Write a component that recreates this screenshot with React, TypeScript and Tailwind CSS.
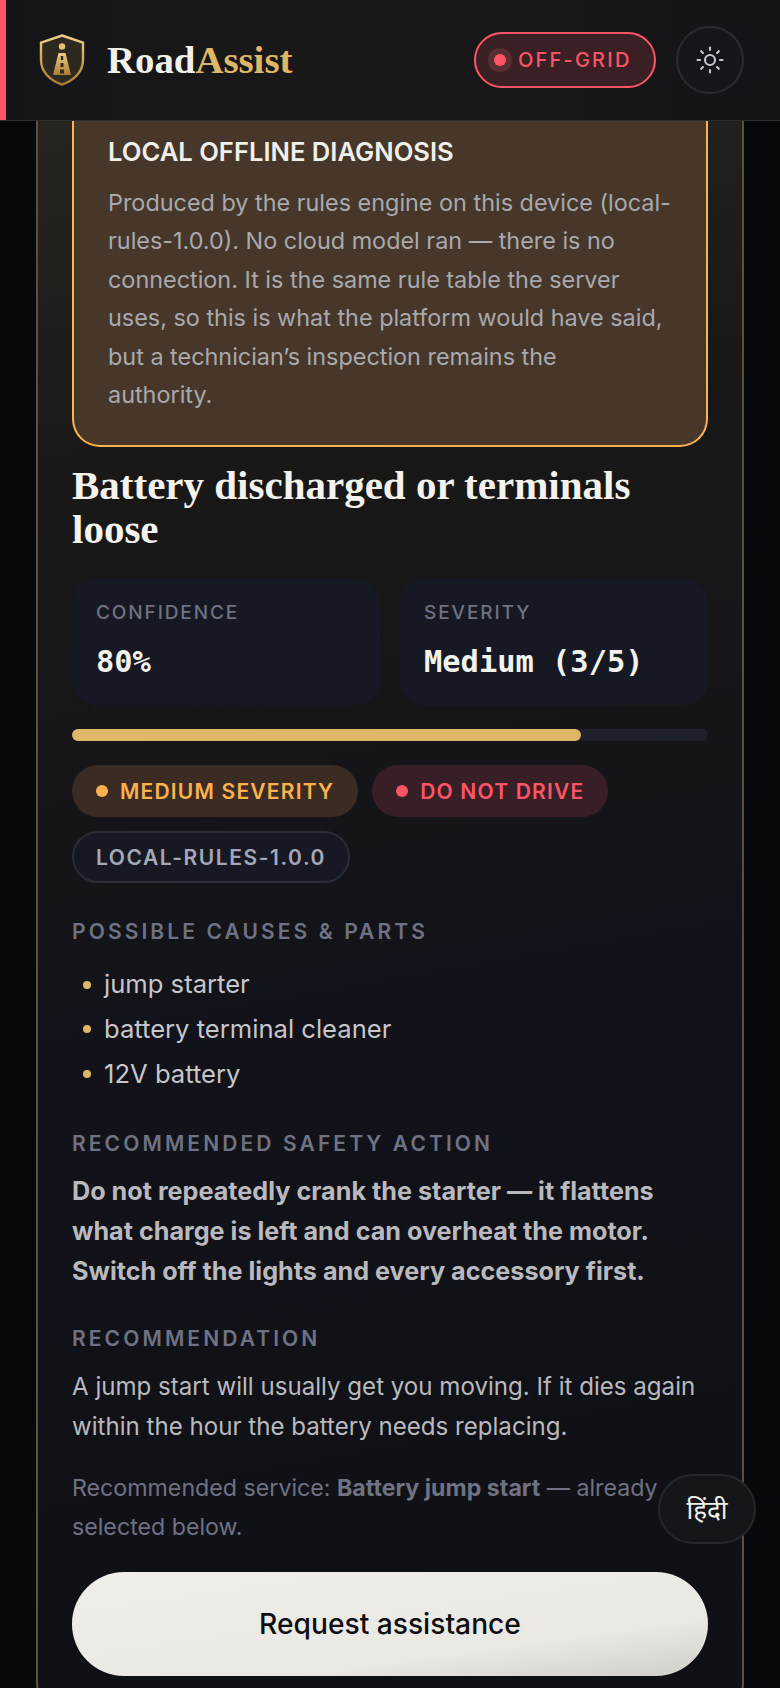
import type { ReactNode } from 'react';
import { Sun } from 'lucide-react';

const sans = 'font-["Inter","Noto_Sans",sans-serif]';

function Logo() {
  return (
    <svg width="46" height="52" viewBox="0 0 46 52" className="shrink-0">
      <defs>
        <linearGradient id="gold" x1="0" y1="0" x2="0" y2="1">
          <stop offset="0" stopColor="#f0cf85" />
          <stop offset="1" stopColor="#a87c30" />
        </linearGradient>
      </defs>
      <path
        d="M23 1.5 L44 8.5 V26 C44 38 35 46.5 23 50.5 C11 46.5 2 38 2 26 V8.5 Z"
        fill="#2d2920"
        stroke="url(#gold)"
        strokeWidth="2.4"
      />
      <circle cx="23" cy="12.5" r="3.2" fill="#e8c070" />
      <path d="M19.5 19 H26.5 L32 41 H14 Z" fill="url(#gold)" />
      <rect x="21.8" y="22" width="2.4" height="4" fill="#2d2920" />
      <rect x="21.5" y="29" width="3" height="4" fill="#2d2920" />
      <rect x="21" y="35.5" width="4" height="4" fill="#2d2920" />
    </svg>
  );
}

function Header() {
  return (
    <header className="relative z-10 flex h-[121px] shrink-0 items-center justify-between border-b border-[#2e2e30] bg-[linear-gradient(90deg,#141518,#1a1918_45%,#131418)] pl-[39px] pr-[36px]">
      <div className="absolute bottom-0 left-0 top-0 w-[6px] bg-[#ff5566]" />
      <div className="flex items-center gap-[22px]">
        <Logo />
        <div className="font-['Liberation_Serif',serif] text-[38.8px] font-bold leading-none text-[#f2f0ea]">
          Road<span className="text-[#dfb765]">Assist</span>
        </div>
      </div>
      <div className="flex items-center gap-[20px]">
        <div className="flex h-[56px] w-[182px] items-center rounded-full border-2 border-[#ff5566] bg-[#3a1f25] pl-[12px]">
          <span className="flex h-[24px] w-[24px] items-center justify-center rounded-full bg-[#5a2c33]">
            <span className="h-[12px] w-[12px] rounded-full bg-[#ff5566]" />
          </span>
          <span className={`ml-[6px] text-[20px] font-medium tracking-[2.2px] text-[#ff5566] ${sans}`}>OFF-GRID</span>
        </div>
        <div className="flex h-[68px] w-[68px] items-center justify-center rounded-full border-2 border-[#2b2c31] bg-[#15161b]">
          <Sun size={30} strokeWidth={1.7} className="text-[#c3c5cf]" />
        </div>
      </div>
    </header>
  );
}

function Stat({ label, value }: { label: string; value: string }) {
  return (
    <div className="h-[126px] flex-1 rounded-[24px] bg-[#161923] px-[24px] pt-[23px]">
      <div className={`text-[19px] font-medium leading-[22px] tracking-[1.9px] text-[#6f7282] ${sans}`}>{label}</div>
      <div className="mt-[20px] font-['DejaVu_Sans_Mono',monospace] text-[30.4px] font-bold leading-[36px] text-[#f4f2ec]">{value}</div>
    </div>
  );
}

function Chip({ dot, className, children }: { dot?: string; className: string; children: ReactNode }) {
  return (
    <span className={`flex h-[52px] items-center gap-[12px] rounded-full px-[24px] text-[21px] font-semibold tracking-[1.2px] ${sans} ${className}`}>
      {dot && <span className={`h-[12px] w-[12px] rounded-full ${dot}`} />}
      {children}
    </span>
  );
}

function Label({ children }: { children: ReactNode }) {
  return <h3 className={`text-[21px] font-semibold leading-[26px] tracking-[3.1px] text-[#6f7282] ${sans}`}>{children}</h3>;
}

export default function App() {
  return (
    <div className={`flex h-[1688px] w-[780px] flex-col overflow-hidden bg-[#07080c] ${sans}`}>
      <Header />
      <main className="min-h-0 flex-1 overflow-hidden px-[36px]">
        <section className="rounded-b-[24px] border-x-2 border-b-2 border-[#5d5038] bg-[linear-gradient(170deg,#272420_0%,#191817_22%,#12131a_55%,#0f1015_100%)] px-[34px] pb-[30px]">
          <div className="rounded-b-[28px] border-x-2 border-b-2 border-[#ffb14e] bg-[#46372a] px-[34px] pb-[31px] pt-[15px]">
            <div className="text-[25.6px] font-semibold leading-[32px] text-[#f1efe9]">LOCAL OFFLINE DIAGNOSIS</div>
            <p className="mt-[16px] text-[23.4px] leading-[38.4px] text-[#a9a9ad]">
              Produced by the rules engine on this device (local-rules-1.0.0). No cloud model ran — there is no connection. It is the same rule table the server uses, so this is what the platform would have said, but a technician’s inspection remains the
              <br />
              authority.
            </p>
          </div>

          <h2 className="mt-[16px] font-['Liberation_Serif',serif] text-[41px] font-bold leading-[44px] text-[#f4f2ec]">
            Battery discharged or terminals loose
          </h2>

          <div className="mt-[28px] flex gap-[20px]">
            <Stat label="CONFIDENCE" value="80%" />
            <Stat label="SEVERITY" value="Medium (3/5)" />
          </div>

          <div className="mt-[24px] h-[12px] rounded-full bg-[#1e212b]">
            <div className="h-full rounded-full bg-[#e0b768]" style={{ width: '80%' }} />
          </div>

          <div className="mt-[24px] flex flex-wrap gap-x-[14px] gap-y-[14px]">
            <Chip dot="bg-[#ffb14e]" className="bg-[#3a2c22] text-[#ffb14e]">MEDIUM SEVERITY</Chip>
            <Chip dot="bg-[#ff5566]" className="bg-[#381e26] text-[#ff5566]">DO NOT DRIVE</Chip>
            <Chip className="border-2 border-[#2a2c36] !px-[22px] !tracking-[1.55px] bg-[#161923] text-[#a5a7b5]">LOCAL-RULES-1.0.0</Chip>
          </div>

          <div className="mt-[36px]">
            <Label>POSSIBLE CAUSES &amp; PARTS</Label>
            <ul className="mt-[17px] text-[25.6px] leading-[44.6px] text-[#c6c6cb]">
              {['jump starter', 'battery terminal cleaner', '12V battery'].map((part) => (
                <li key={part} className="flex items-center gap-[13px] pl-[11px]">
                  <span className="h-[8px] w-[8px] rounded-full bg-[#e0b768]" />
                  {part}
                </li>
              ))}
            </ul>
          </div>

          <div className="mt-[35px]">
            <Label>RECOMMENDED SAFETY ACTION</Label>
            <p className="mt-[14px] text-[25.2px] font-bold leading-[40px] text-[#b9b9be]">
              Do not repeatedly crank the starter — it flattens what charge is left and can overheat the motor. Switch off the lights and every accessory first.
            </p>
          </div>

          <div className="mt-[35px]">
            <Label>RECOMMENDATION</Label>
            <p className="mt-[15px] text-[24.1px] leading-[40px] text-[#b9b9be]">
              A jump start will usually get you moving. If it dies again within the hour the battery needs replacing.
            </p>
          </div>

          <p className="mt-[22px] text-[23.2px] leading-[38.5px] text-[#6f7282]">
            Recommended service: <strong className="font-bold">Battery jump start</strong> — already selected below.
          </p>

          <button className="mt-[26px] h-[104px] w-full rounded-full bg-[linear-gradient(172deg,#efeee8_0%,#e9e8e2_70%,#cfcec8_100%)] text-[28.2px] font-medium text-[#0d0e12]">
            Request assistance
          </button>
        </section>
      </main>
      <div className="absolute left-[658px] top-[1474px] flex h-[70px] w-[98px] items-center justify-center rounded-full border-2 border-[#26272c] bg-[#15161a] font-['Noto_Sans','DejaVu_Sans',sans-serif] text-[26px] text-[#f2f0ea]">
        हिंदी
      </div>
    </div>
  );
}
